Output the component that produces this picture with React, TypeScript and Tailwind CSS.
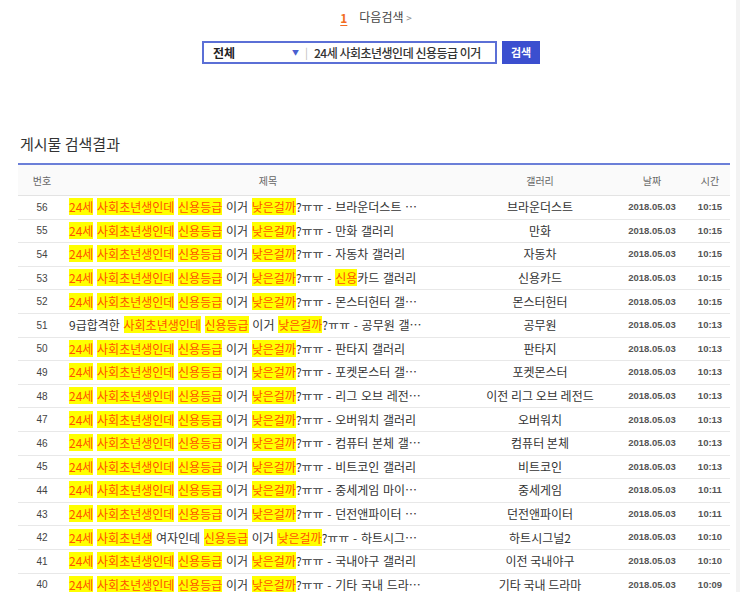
import React from "react";

type Row = {
  no: number;
  title: React.ReactNode;
  gallery: string;
  time: string;
};

function H({ children }: { children: React.ReactNode }) {
  return <span className="bg-[#ffff00] text-[#ff5200]">{children}</span>;
}

function base(tail: string) {
  return (
    <>
      <H>24세</H> <H>사회초년생인데</H> <H>신용등급</H> 이거 <H>낮은걸까</H>?ㅠㅠ - {tail}
    </>
  );
}

const rows: Row[] = [
  { no: 56, title: base("브라운더스트 …"), gallery: "브라운더스트", time: "10:15" },
  { no: 55, title: base("만화 갤러리"), gallery: "만화", time: "10:15" },
  { no: 54, title: base("자동차 갤러리"), gallery: "자동차", time: "10:15" },
  {
    no: 53,
    title: (
      <>
        <H>24세</H> <H>사회초년생인데</H> <H>신용등급</H> 이거 <H>낮은걸까</H>?ㅠㅠ - <H>신용</H>카드 갤러리
      </>
    ),
    gallery: "신용카드",
    time: "10:15",
  },
  { no: 52, title: base("몬스터헌터 갤…"), gallery: "몬스터헌터", time: "10:15" },
  {
    no: 51,
    title: (
      <>
        9급합격한 <H>사회초년생인데</H> <H>신용등급</H> 이거 <H>낮은걸까</H>?ㅠㅠ - 공무원 갤…
      </>
    ),
    gallery: "공무원",
    time: "10:13",
  },
  { no: 50, title: base("판타지 갤러리"), gallery: "판타지", time: "10:13" },
  { no: 49, title: base("포켓몬스터 갤…"), gallery: "포켓몬스터", time: "10:13" },
  { no: 48, title: base("리그 오브 레전…"), gallery: "이전 리그 오브 레전드", time: "10:13" },
  { no: 47, title: base("오버워치 갤러리"), gallery: "오버워치", time: "10:13" },
  { no: 46, title: base("컴퓨터 본체 갤…"), gallery: "컴퓨터 본체", time: "10:13" },
  { no: 45, title: base("비트코인 갤러리"), gallery: "비트코인", time: "10:13" },
  { no: 44, title: base("중세게임 마이…"), gallery: "중세게임", time: "10:11" },
  { no: 43, title: base("던전앤파이터 …"), gallery: "던전앤파이터", time: "10:11" },
  {
    no: 42,
    title: (
      <>
        <H>24세</H> <H>사회초년생</H> 여자인데 <H>신용등급</H> 이거 <H>낮은걸까</H>?ㅠㅠ - 하트시그…
      </>
    ),
    gallery: "하트시그널2",
    time: "10:10",
  },
  { no: 41, title: base("국내야구 갤러리"), gallery: "이전 국내야구", time: "10:10" },
  { no: 40, title: base("기타 국내 드라…"), gallery: "기타 국내 드라마", time: "10:09" },
];

const font = { fontFamily: '"Noto Sans CJK KR", "Noto Sans", sans-serif' };
const num = { fontFamily: '"Liberation Sans", Arial, sans-serif' };

export default function App() {
  return (
    <div className="flex min-h-[592px] bg-white text-[#333]" style={font}>
      <div className="w-[736px] shrink-0">
        <div className="flex items-center justify-center gap-[12px] pt-[7px] pl-[16px] text-[12px] leading-[20px]">
          <span className="font-bold text-[#f26c22] underline underline-offset-2">1</span>
          <span className="text-[#444]">
            다음검색 <span className="text-[10px] text-[#888]">&gt;</span>
          </span>
        </div>

        <div className="mt-[13px] flex justify-center gap-[5px] pl-[6px]">
          <div className="flex h-[23px] w-[295px] items-center border-2 border-[#5b6fd6] bg-white text-[12px]">
            <span className="w-[88px] pl-[9px] font-semibold text-[#222]">전체</span>
            <span className="text-[7px] text-[#4a5fd0]">▼</span>
            <span className="ml-[6px] text-[11px] text-[#bbb]">|</span>
            <span className="ml-[6px] font-medium tracking-[-0.5px] text-[#333]">
              24세 사회초년생인데 신용등급 이거
            </span>
          </div>
          <button className="h-[23px] w-[38px] bg-[#3b4fcf] text-[11px] font-bold text-white">
            검색
          </button>
        </div>

        <div className="mt-[70px] ml-[20px] text-[15px] leading-[20px] text-[#333]">게시물 검색결과</div>

        <div className="ml-[18px] mt-[9px] w-[712px] border-t-2 border-[#6b7fd8]">
          <div className="flex h-[31px] items-center border-b border-[#e3e3e3] bg-[#fafafa] text-[10px] text-[#666]">
            <div className="w-[48px] text-center">번호</div>
            <div className="w-[404px] text-center">제목</div>
            <div className="w-[140px] text-center">갤러리</div>
            <div className="w-[84px] text-center">날짜</div>
            <div className="w-[32px] text-center">시간</div>
          </div>
          {rows.map((r) => (
            <div
              key={r.no}
              className="flex h-[23.6px] items-center border-b border-[#e8e8e8] text-[12px]"
            >
              <div className="w-[48px] text-center text-[10px] text-[#444]" style={num}>
                {r.no}
              </div>
              <div className="w-[404px] truncate pl-[3px] text-[#333] [word-spacing:1px]">{r.title}</div>
              <div className="w-[140px] text-center text-[#333]">{r.gallery}</div>
              <div className="w-[84px] text-center text-[9.5px] font-bold text-[#555]" style={num}>
                2018.05.03
              </div>
              <div className="w-[32px] text-center text-[9.5px] font-bold text-[#555]" style={num}>
                {r.time}
              </div>
            </div>
          ))}
        </div>
      </div>
      <div className="flex-1 bg-[#f3f3f3]" />
    </div>
  );
}
